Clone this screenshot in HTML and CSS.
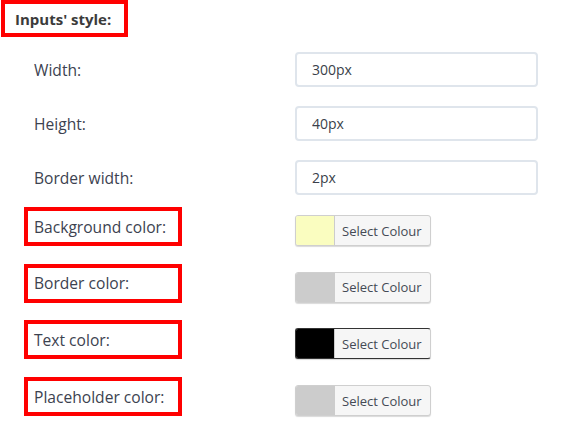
FILE: index.html
```html
<!DOCTYPE html>
<html>
<head>
<meta charset="utf-8">
<link rel="stylesheet" href="styles.css">
</head>
<body>
<div class="page">
  <div class="title"><span>Inputs' style:</span></div>
  <div class="rows">
    <div class="row text-row">
      <div class="label">Width:</div>
      <div class="value"><input class="field" type="text" value="300px"></div>
    </div>
    <div class="row text-row">
      <div class="label">Height:</div>
      <div class="value"><input class="field" type="text" value="40px"></div>
    </div>
    <div class="row text-row">
      <div class="label">Border width:</div>
      <div class="value"><input class="field" type="text" value="2px"></div>
    </div>
    <div class="row color-row">
      <div class="label marked">Background color:</div>
      <div class="value"><div class="picker"><span class="swatch yellow"></span><span class="btn">Select Colour</span></div></div>
    </div>
    <div class="row color-row">
      <div class="label marked">Border color:</div>
      <div class="value"><div class="picker"><span class="swatch grey"></span><span class="btn">Select Colour</span></div></div>
    </div>
    <div class="row color-row">
      <div class="label marked">Text color:</div>
      <div class="value"><div class="picker dark"><span class="swatch black"></span><span class="btn">Select Colour</span></div></div>
    </div>
    <div class="row color-row">
      <div class="label marked">Placeholder color:</div>
      <div class="value"><div class="picker"><span class="swatch grey"></span><span class="btn">Select Colour</span></div></div>
    </div>
  </div>
</div>
</body>
</html>
```

FILE: styles.css
```css
html, body {
  margin: 0;
  padding: 0;
  background: #ffffff;
}
body {
  font-family: "Open Sans", "Noto Sans", "Liberation Sans", sans-serif;
  color: #3c4250;
}
.page {
  width: 565px;
  height: 434px;
  overflow: hidden;
}
.title {
  box-sizing: border-box;
  margin-left: 1px;
  width: 127px;
  height: 37px;
  border: 4px solid #ff0000;
  display: flex;
  align-items: center;
  padding-left: 10px;
  font-weight: 700;
  font-size: 15px;
  color: #3b3b3b;
}
.rows {
  padding-left: 24px;
  margin-top: 5px;
}
.row {
  display: flex;
}
.text-row {
  height: 54px;
  align-items: center;
}
.color-row {
  height: 56.7px;
  align-items: flex-start;
}
.label {
  box-sizing: border-box;
  width: 158px;
  border: 4px solid transparent;
  padding-left: 6px;
  font-size: 15.6px;
  display: flex;
  align-items: center;
}
.text-row .label {
  height: 40px;
  padding-top: 2px;
}
.color-row .label {
  margin-top: 3px;
  height: 39px;
}
.label.marked {
  border-color: #ff0000;
}
.value {
  margin-left: 113px;
}
.field {
  box-sizing: border-box;
  width: 243px;
  height: 35px;
  border: 2px solid #dfe5ec;
  border-radius: 4px;
  padding: 0 0 0 15px;
  margin: 0;
  font-family: "Open Sans", "Noto Sans", sans-serif;
  font-size: 14px;
  color: #3a3f4a;
  outline: none;
  background: #fff;
}
.picker {
  margin-top: 11px;
  box-sizing: border-box;
  width: 136px;
  height: 31px;
  display: flex;
  border: 1px solid #cfcfcf;
  border-radius: 3px;
  background: #f6f6f6;
  box-shadow: 0 1px 1px rgba(0, 0, 0, 0.15);
  overflow: hidden;
}
.picker.dark {
  border-color: #333;
  border-right-color: #cfcfcf;
  border-bottom-color: #333;
}
.swatch {
  width: 38px;
  height: 100%;
  border-right: 1px solid #cccccc;
}
.swatch.yellow { background: #fafdc0; }
.swatch.grey { background: #cccccc; }
.swatch.black { background: #000000; }
.btn {
  display: flex;
  align-items: center;
  padding-left: 7px;
  font-size: 13px;
  color: #444a55;
}
```
